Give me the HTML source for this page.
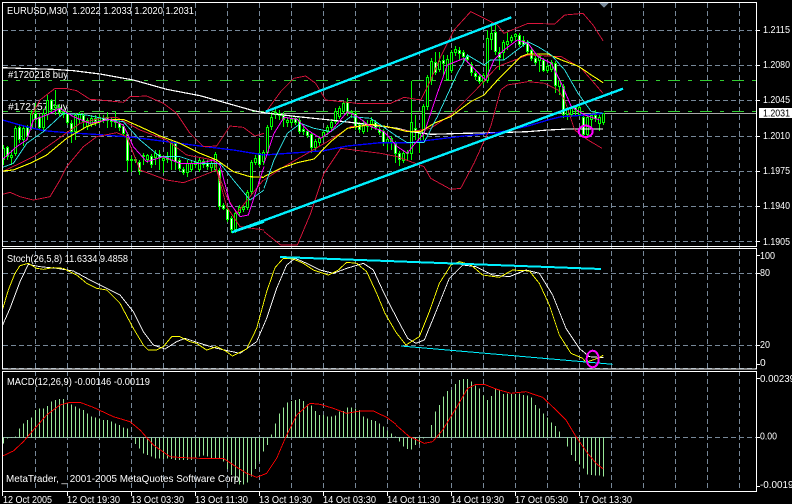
<!DOCTYPE html>
<html><head><meta charset="utf-8"><style>
html,body{margin:0;padding:0;background:#000;width:792px;height:504px;overflow:hidden}
svg{display:block}
text{font-family:"Liberation Sans",sans-serif;font-size:10.2px;fill:#fff}
polyline,path.l,ellipse{fill:none}
</style></head><body>
<svg width="792" height="504" viewBox="0 0 792 504" shape-rendering="crispEdges" xmlns="http://www.w3.org/2000/svg">
<rect width="792" height="504" fill="#000"/>
<!-- grid -->
<path class="l" stroke="#778899" stroke-dasharray="5 3" d="M35.5 3V491M67.5 3V491M99.5 3V491M131.5 3V491M163.5 3V491M195.5 3V491M227.5 3V491M259.5 3V491M291.5 3V491M323.5 3V491M355.5 3V491M387.5 3V491M419.5 3V491M451.5 3V491M483.5 3V491M515.5 3V491M547.5 3V491M579.5 3V491M611.5 3V491M643.5 3V491M675.5 3V491M707.5 3V491M739.5 3V491"/>
<path class="l" stroke="#778899" stroke-dasharray="5 3" d="M3 30.5H756M3 65.5H756M3 100.5H756M3 136.5H756M3 171.5H756M3 206.5H756M3 241.5H756M3 273.5H756M3 345.5H756M3 368.5H756M3 437.5H756"/>
<path class="l" stroke="#8fb0a8" d="M3 437.5H611"/>
<path class="l" stroke="#32cd32" stroke-dasharray="12 8 4 8" stroke-dashoffset="-25" d="M3 80.5H756M3 111.5H756"/>
<path class="l" stroke="#a8a8a8" d="M3 113.5H756"/>
<path d="M599.5 3H608.5L604 8Z" fill="#778899"/>
<!-- labels under candles -->
<text x="8" y="78" textLength="60" lengthAdjust="spacingAndGlyphs">#1720218 buy</text>
<text x="8" y="110" textLength="60" lengthAdjust="spacingAndGlyphs">#172157 buy</text>
<!-- candles -->
<path class="l" stroke="#00ff00" d="M3.5 145V165M7.5 146V160M11.5 150V165M15.5 126V156M19.5 124V143M23.5 125V146M27.5 125V140M31.5 110V130M35.5 103V123M39.5 114V130M43.5 109V131M47.5 95V120M51.5 99V113M55.5 90V115M59.5 104V116M63.5 109V118M67.5 111V125M71.5 120V143M75.5 113V140M79.5 112V124M83.5 113V128M87.5 118V130M91.5 115V127M95.5 115V126M99.5 114V124M103.5 115V123M107.5 112V128M111.5 117V127M115.5 112V128M119.5 121V131M123.5 124V137M127.5 132V172M131.5 156V172M135.5 157V163M139.5 160V175M143.5 153V165M147.5 154V163M151.5 154V168M155.5 150V165M159.5 150V170M163.5 155V173M167.5 152V163M171.5 141V170M175.5 142V170M179.5 158V171M183.5 167V175M187.5 160V177M191.5 160V172M195.5 160V168M199.5 158V172M203.5 159V168M207.5 160V170M211.5 160V172M215.5 152V172M219.5 168V210M223.5 203V210M227.5 207V222M231.5 216V233M235.5 210V233M239.5 205V216M243.5 205V212M247.5 190V210M251.5 160V195M255.5 155V165M259.5 138V167M263.5 150V165M267.5 125V155M271.5 112V130M275.5 108V119M279.5 110V120M283.5 112V127M287.5 117V127M291.5 116V126M295.5 116V125M299.5 118V134M303.5 126V135M307.5 129V138M311.5 132V153M315.5 139V151M319.5 136V146M323.5 130V140M327.5 125V135M331.5 119V130M335.5 108V124M339.5 106V119M343.5 101V114M347.5 98V116M351.5 110V118M355.5 111V130M359.5 122V133M363.5 120V134M367.5 120V132M371.5 117V130M375.5 120V130M379.5 127V135M383.5 129V146M387.5 137V150M391.5 136V150M395.5 141V163M399.5 151V166M403.5 150V163M407.5 150V160M411.5 81V160M415.5 115V140M419.5 130V153M423.5 104V140M427.5 75V110M431.5 58V85M435.5 52V75M439.5 52V72M443.5 55V75M447.5 55V81M451.5 50V73M455.5 46V56M459.5 47V60M463.5 50V63M467.5 54V63M471.5 62V76M475.5 71V80M479.5 74V84M483.5 73V85M487.5 30V83M491.5 23V50M495.5 23V55M499.5 47V70M503.5 40V60M507.5 32V50M511.5 35V43M515.5 33V42M519.5 33V47M523.5 36V47M527.5 40V55M531.5 47V61M535.5 56V65M539.5 54V72M543.5 58V72M547.5 64V73M551.5 60V72M555.5 61V93M559.5 78V95M563.5 84V118M567.5 107V120M571.5 106V117M575.5 105V115M579.5 105V117M583.5 115V137M587.5 115V137M591.5 113V127M595.5 110V122M599.5 115V131M603.5 113V125"/>
<path class="l" stroke="#00ff00" stroke-width="3" d="M3.5 148V160M7.5 147V157M11.5 155V158M15.5 128V154M19.5 127V140M23.5 128V140M27.5 127V137M31.5 113V128M35.5 113V120M39.5 117V128M43.5 113V128M47.5 100V115M51.5 100V110M55.5 105V108M59.5 107V113M63.5 112V115M67.5 113V123M71.5 123V132M75.5 115V132M79.5 113V120M83.5 115V122M87.5 120V127M91.5 118V125M95.5 118V122M99.5 117V121M103.5 118V121M107.5 117V121M111.5 119V122M115.5 119V123M119.5 123V128M123.5 126V134M127.5 134V161M131.5 159V161M135.5 159V161M139.5 162V172M143.5 155V157M147.5 155V160M151.5 156V165M155.5 153V158M159.5 154V158M163.5 158V161M167.5 157V160M171.5 143V161M175.5 143V162M179.5 160V169M183.5 169V173M187.5 163V173M191.5 163V170M195.5 162V165M199.5 160V170M203.5 161V165M207.5 163V167M211.5 163V168M215.5 154V170M219.5 170V207M223.5 205V209M227.5 209V220M231.5 218V230M235.5 213V230M239.5 207V213M243.5 207V210M247.5 192V208M251.5 162V192M255.5 158V163M259.5 153V165M263.5 152V162M267.5 127V153M271.5 117V127M275.5 112V115M279.5 113V116M283.5 115V120M287.5 120V123M291.5 119V123M295.5 118V123M299.5 120V132M303.5 129V132M307.5 131V136M311.5 134V148M315.5 141V148M319.5 138V143M323.5 132V137M327.5 127V132M331.5 122V128M335.5 111V122M339.5 108V117M343.5 103V112M347.5 102V113M351.5 112V113M355.5 113V127M359.5 124V130M363.5 125V132M367.5 124V127M371.5 120V127M375.5 122V128M379.5 129V133M383.5 131V143M387.5 139V143M391.5 138V142M395.5 143V154M399.5 153V160M403.5 153V161M407.5 152V154M411.5 122V154M415.5 128V132M419.5 133V143M423.5 106V133M427.5 77V107M431.5 61V80M435.5 62V73M439.5 61V70M443.5 60V64M447.5 59V80M451.5 52V71M455.5 49V53M459.5 50V54M463.5 52V57M467.5 56V60M471.5 64V73M475.5 73V77M479.5 76V82M483.5 75V82M487.5 38V81M491.5 33V40M495.5 32V52M499.5 52V58M503.5 42V53M507.5 41V45M511.5 37V41M515.5 34V37M519.5 35V45M523.5 40V45M527.5 42V52M531.5 50V59M535.5 58V63M539.5 56V61M543.5 60V71M547.5 66V71M551.5 62V70M555.5 63V86M559.5 80V87M563.5 86V115M567.5 109V115M571.5 108V115M575.5 107V110M579.5 107V115M583.5 117V135M587.5 117V135M591.5 115V120M595.5 115V119M599.5 117V124M603.5 113V123"/>
<path class="l" stroke="#000" d="M3.5 149V159M11.5 156V157M15.5 129V153M23.5 129V139M31.5 114V127M43.5 114V127M47.5 101V114M55.5 106V107M75.5 116V131M79.5 114V119M87.5 121V126M91.5 119V124M99.5 118V120M147.5 156V159M155.5 154V157M163.5 159V160M171.5 144V160M187.5 164V172M191.5 164V169M199.5 161V169M211.5 164V167M215.5 155V169M235.5 214V229M239.5 208V212M243.5 208V209M247.5 193V207M251.5 163V191M255.5 159V162M263.5 153V161M267.5 128V152M271.5 118V126M275.5 113V114M287.5 121V122M291.5 120V122M315.5 142V147M319.5 139V142M323.5 133V136M327.5 128V131M331.5 123V127M335.5 112V121M339.5 109V116M343.5 104V111M363.5 126V131M367.5 125V126M371.5 121V126M387.5 140V142M391.5 139V141M403.5 154V160M411.5 123V153M419.5 134V142M423.5 107V132M427.5 78V106M431.5 62V79M439.5 62V69M447.5 60V79M451.5 53V70M455.5 50V52M483.5 76V81M487.5 39V80M491.5 34V39M503.5 43V52M507.5 42V44M511.5 38V40M515.5 35V36M539.5 57V60M547.5 67V70M551.5 63V69M559.5 81V86M567.5 110V114M571.5 109V114M579.5 108V114M587.5 118V134M591.5 116V119M599.5 118V123M603.5 114V122"/>
<path class="l" stroke="#fff" d="M7.5 148V156M19.5 128V139M27.5 128V136M35.5 114V119M39.5 118V127M51.5 101V109M59.5 108V112M63.5 113V114M67.5 114V122M71.5 124V131M83.5 116V121M95.5 119V121M103.5 119V120M107.5 118V120M111.5 120V121M115.5 120V122M119.5 124V127M123.5 127V133M127.5 135V160M139.5 163V171M151.5 157V164M159.5 155V157M167.5 158V159M175.5 144V161M179.5 161V168M183.5 170V172M195.5 163V164M203.5 162V164M207.5 164V166M219.5 171V206M223.5 206V208M227.5 210V219M231.5 219V229M259.5 154V164M279.5 114V115M283.5 116V119M295.5 119V122M299.5 121V131M303.5 130V131M307.5 132V135M311.5 135V147M347.5 103V112M355.5 114V126M359.5 125V129M375.5 123V127M379.5 130V132M383.5 132V142M395.5 144V153M399.5 154V159M415.5 129V131M435.5 63V72M443.5 61V63M459.5 51V53M463.5 53V56M467.5 57V59M471.5 65V72M475.5 74V76M479.5 77V81M495.5 33V51M499.5 53V57M519.5 36V44M523.5 41V44M527.5 43V51M531.5 51V58M535.5 59V62M543.5 61V70M555.5 64V85M563.5 87V114M575.5 108V109M583.5 118V134M595.5 116V118"/>
<!-- pane 1 curves: left -->
<g transform="scale(.33333)" fill="none" stroke-width="2.7">
<polyline stroke="#fff" stroke-width="3.6" points="8,203 60,205 160,208 220,212 300,222 400,240 500,268 600,287 700,315 760,332 792,338"/>
<polyline stroke="#0000ff" stroke-width="4" points="8,360 60,375 130,392 200,398 300,404 400,412 500,425 600,438 700,450 792,465"/>
<polyline stroke="#dc143c" points="95,345 120,300 165,265 195,265 230,272 270,298 300,300 370,307 390,290 440,288 490,310 530,340 570,400 610,440 650,438 690,378 730,382 765,408 792,400"/>
<polyline stroke="#dc143c" points="8,583 30,577 60,590 100,600 150,590 180,540 200,500 250,440 290,410 350,398 380,410 420,510 500,540 550,548 600,530 650,510 680,620 720,680 792,690"/>
<polyline stroke="#dc143c" points="8,515 100,470 170,420 240,370 300,355 350,352 420,390 500,420 560,465 640,480 680,590 710,640 790,540"/>
<polyline stroke="#ffff00" stroke-width="3.3" points="8,513 40,510 90,490 140,465 200,415 260,380 320,358 370,358 420,380 480,408 540,430 600,460 650,480 700,515 750,530 792,532"/>
<polyline stroke="#30e8e8" points="8,502 40,490 80,430 130,395 190,340 260,345 320,358 370,365 420,420 480,470 540,470 600,490 660,490 700,540 750,600 792,570"/>
<polyline stroke="#ff00ff" stroke-width="3" points="8,478 50,440 80,420 100,360 140,345 180,325 220,350 270,370 330,358 370,375 400,440 440,485 490,470 540,490 600,490 640,480 660,495 690,610 720,650 745,645 792,500"/>
<line x1="695" y1="697" x2="792" y2="665" stroke="#00ffff" stroke-width="7"/>
</g>
<!-- pane 1 curves: middle -->
<g transform="translate(264 0) scale(.33333)" fill="none" stroke-width="2.7">
<polyline stroke="#fff" stroke-width="3.6" points="0,338 100,350 200,360 300,372 400,385 440,395 500,403 600,400 700,398 792,395"/>
<polyline stroke="#0000ff" stroke-width="4" points="0,465 100,458 180,452 250,438 350,428 440,428 500,420 600,408 700,398 792,378"/>
<polyline stroke="#dc143c" points="10,330 50,275 90,235 125,228 155,250 185,300 280,310 380,310 420,292 470,300 500,240 530,170 570,90 620,35 660,55 700,75 720,100 792,70"/>
<polyline stroke="#dc143c" points="0,695 50,735 100,735 140,640 180,520 230,445 350,460 400,470 440,485 480,500 500,535 560,568 590,565 630,490 680,380 710,270 730,255 792,245"/>
<polyline stroke="#dc143c" points="0,540 60,500 130,460 190,425 260,380 340,375 440,395 500,385 560,345 640,265 700,200 792,165"/>
<polyline stroke="#ffff00" stroke-width="3.3" points="0,530 50,505 100,488 150,477 200,425 250,385 320,373 370,380 430,395 470,395 510,370 560,350 620,305 660,285 710,230 770,170 792,162"/>
<polyline stroke="#30e8e8" points="0,565 30,480 70,400 110,370 150,385 200,395 260,350 320,355 350,375 400,410 430,428 480,428 520,350 580,220 610,165 660,195 680,180 720,180 792,125"/>
<polyline stroke="#ff00ff" stroke-width="3" points="0,490 30,400 60,352 100,358 130,390 170,415 200,395 250,335 280,350 320,380 360,395 400,440 430,460 445,440 480,400 520,280 550,195 600,175 640,215 665,240 690,180 720,150 760,120 792,130"/>
</g>
<!-- pane 1 curves: right -->
<g transform="translate(528 0) scale(.33333)" fill="none" stroke-width="2.7">
<polyline stroke="#fff" stroke-width="3.6" points="0,395 60,390 120,387 225,387"/>
<polyline stroke="#0000ff" stroke-width="4" points="0,378 60,360 100,350 160,346 225,340"/>
<polyline stroke="#dc143c" points="0,70 80,72 110,45 165,40 195,75 225,122"/>
<polyline stroke="#dc143c" points="0,245 50,250 90,270 110,300 140,390 180,420 222,445"/>
<polyline stroke="#dc143c" points="0,165 100,170 160,205 225,280"/>
<polyline stroke="#ffff00" stroke-width="3.3" points="0,162 60,162 100,180 150,198 190,225 225,248"/>
<polyline stroke="#30e8e8" points="0,125 30,140 70,165 110,210 150,280 190,335 225,340"/>
<polyline stroke="#ff00ff" stroke-width="3" points="0,130 30,170 70,190 100,250 130,320 170,345 215,360"/>
</g>
<!-- thick channels -->
<path class="l" stroke="#00f0ff" stroke-width="2.4" d="M265.7 111.7L511.3 17.3M231.7 232.3L623 88.7"/>
<ellipse cx="585.7" cy="131.3" rx="7" ry="5.7" stroke="#ff00ff" stroke-width="2"/>
<!-- stochastic + macd -->
<g transform="translate(0 245) scale(.33333)" fill="none" stroke-width="2.7">
<polyline stroke="#fff" points="8,240 30,190 60,110 85,58 120,65 170,70 220,78 270,105 310,125 360,150 400,200 430,260 460,300 495,312 530,290 555,280 600,295 650,310 720,325 770,290 800,220 830,130 860,60 885,40 920,55 960,75 1000,85 1040,70 1090,55 1120,75 1150,140 1188,215"/>
<polyline stroke="#ffff00" points="8,192 25,135 45,85 60,62 85,55 110,70 130,73 160,68 190,70 230,90 260,115 290,130 320,135 360,175 400,250 430,300 445,315 470,315 490,305 515,275 540,275 570,290 590,295 620,315 650,305 680,320 697,333 740,312 770,250 800,140 825,68 850,40 880,42 910,55 940,75 985,90 1015,75 1040,52 1070,55 1100,80 1130,145 1155,205 1188,262"/>
<path stroke="#98e898" stroke-width="3" d="M10.5 577V595M22.5 577V580M34.5 577V579M46.5 577V575M58.5 577V550M70.5 577V535M82.5 577V525M94.5 577V517M106.5 577V495M118.5 577V490M130.5 577V490M142.5 577V483M154.5 577V470M166.5 577V465M178.5 577V462M190.5 577V462M202.5 577V475M214.5 577V478M226.5 577V485M238.5 577V490M250.5 577V495M262.5 577V505M274.5 577V515M286.5 577V517M298.5 577V520M310.5 577V525M322.5 577V525M334.5 577V530M346.5 577V535M358.5 577V540M370.5 577V547M382.5 577V550M406.5 577V597M418.5 577V610M430.5 577V625M442.5 577V630M454.5 577V635M466.5 577V640M478.5 577V640M490.5 577V642M502.5 577V640M514.5 577V642M526.5 577V645M538.5 577V645M550.5 577V645M562.5 577V645M574.5 577V645M586.5 577V640M598.5 577V635M610.5 577V632M622.5 577V635M634.5 577V640M646.5 577V640M658.5 577V640M670.5 577V650M682.5 577V672M694.5 577V690M706.5 577V705M718.5 577V718M730.5 577V718M742.5 577V712M754.5 577V695M766.5 577V672M778.5 577V650M790.5 577V620M802.5 577V600M814.5 577V568M826.5 577V535M838.5 577V505M850.5 577V487M862.5 577V472M874.5 577V468M886.5 577V465M898.5 577V462M910.5 577V468M922.5 577V478M934.5 577V482M946.5 577V498M958.5 577V510M970.5 577V510M982.5 577V515M994.5 577V515M1006.5 577V512M1018.5 577V500M1030.5 577V498M1042.5 577V488M1054.5 577V487M1066.5 577V490M1078.5 577V495M1090.5 577V515M1102.5 577V520M1114.5 577V525M1126.5 577V528M1138.5 577V535M1150.5 577V545M1162.5 577V557M1174.5 577V565M1186.5 577V575"/>
<polyline stroke="#ff0000" points="8,633 40,618 70,590 100,555 140,510 180,480 210,472 240,472 280,487 340,515 390,530 420,555 460,600 510,635 550,638 600,640 670,640 700,660 740,685 770,697 800,685 830,640 860,570 890,510 930,475 960,478 1000,490 1040,505 1080,498 1120,498 1160,517 1188,538"/>
</g>
<g transform="translate(396 245) scale(.33333)" fill="none" stroke-width="2.7">
<polyline stroke="#fff" points="0,215 35,280 60,295 85,285 120,200 160,100 200,60 240,65 290,90 340,95 390,75 430,85 470,150 510,250 550,310 580,335 622,338"/>
<polyline stroke="#ffff00" points="0,262 30,300 70,275 100,200 130,115 165,60 190,50 225,60 260,90 310,97 350,75 400,78 430,115 460,180 490,270 525,325 560,340 570,352 610,338 622,330"/>
<path stroke="#98e898" stroke-width="3" d="M10.5 577V590M22.5 577V605M34.5 577V612M46.5 577V613M58.5 577V600M70.5 577V597M82.5 577V580M106.5 577V540M118.5 577V500M130.5 577V480M142.5 577V455M154.5 577V438M166.5 577V435M178.5 577V417M190.5 577V405M202.5 577V402M214.5 577V402M226.5 577V410M238.5 577V422M250.5 577V430M262.5 577V452M274.5 577V465M286.5 577V453M298.5 577V430M310.5 577V437M322.5 577V447M334.5 577V445M346.5 577V447M358.5 577V447M370.5 577V445M382.5 577V450M394.5 577V452M406.5 577V458M418.5 577V480M430.5 577V490M442.5 577V505M454.5 577V518M466.5 577V533M478.5 577V543M490.5 577V560M514.5 577V605M526.5 577V630M538.5 577V648M550.5 577V658M562.5 577V670M574.5 577V688M586.5 577V690M598.5 577V692M610.5 577V692M622.5 577V695"/>
<polyline stroke="#ff0000" points="0,540 40,575 85,595 110,590 140,555 180,490 215,430 240,418 265,418 300,432 345,445 390,440 440,457 480,495 510,525 540,575 575,625 600,655 622,672"/>
</g>
<path class="l" stroke="#00f0ff" stroke-width="2" d="M280 257L601 269"/>
<path class="l" stroke="#00f0ff" d="M401 346L612.7 364.3"/>
<ellipse cx="592.7" cy="359" rx="6" ry="8.3" stroke="#ff00ff" stroke-width="2"/>
<!-- frames -->
<rect x="2.5" y="2.5" width="754" height="244" fill="none" stroke="#fff"/>
<rect x="2.5" y="248.5" width="754" height="120.5" fill="none" stroke="#fff"/>
<rect x="2.5" y="371.5" width="754" height="120" fill="none" stroke="#fff"/>
<path class="l" stroke="#fff" d="M757 30.5H760M757 65.5H760M757 100.5H760M757 136.5H760M757 171.5H760M757 206.5H760M757 241.5H760M757 255.5H760M757 273.5H760M757 345.5H760M757 364.5H760M757 378.5H760M757 437.5H760M757 486.5H760M2.5 492V496M67.5 492V496M131.5 492V496M195.5 492V496M259.5 492V496M323.5 492V496M387.5 492V496M451.5 492V496M515.5 492V496M579.5 492V496"/>
<!-- text -->
<text x="7" y="14" textLength="187" lengthAdjust="spacingAndGlyphs">EURUSD,M30&#160;&#160;1.2022 1.2033 1.2020 1.2031</text>
<text x="7" y="262" textLength="121" lengthAdjust="spacingAndGlyphs">Stoch(26,5,8) 11.6334 9.4858</text>
<text x="7" y="385" textLength="143" lengthAdjust="spacingAndGlyphs">MACD(12,26,9) -0.00146 -0.00119</text>
<text x="6" y="482" textLength="236" lengthAdjust="spacingAndGlyphs">MetaTrader, _ 2001-2005 MetaQuotes Software Corp.</text>
<text x="763" y="33" textLength="27" lengthAdjust="spacingAndGlyphs">1.2115</text>
<text x="763" y="68" textLength="27" lengthAdjust="spacingAndGlyphs">1.2080</text>
<text x="763" y="103" textLength="27" lengthAdjust="spacingAndGlyphs">1.2045</text>
<text x="763" y="139" textLength="27" lengthAdjust="spacingAndGlyphs">1.2010</text>
<text x="763" y="174" textLength="27" lengthAdjust="spacingAndGlyphs">1.1975</text>
<text x="763" y="209" textLength="27" lengthAdjust="spacingAndGlyphs">1.1940</text>
<text x="763" y="245" textLength="27" lengthAdjust="spacingAndGlyphs">1.1905</text>
<rect x="759" y="108" width="33" height="10" fill="#fff"/>
<text x="763" y="116.5" textLength="27" lengthAdjust="spacingAndGlyphs" style="fill:#000">1.2031</text>
<text x="760" y="259" textLength="15" lengthAdjust="spacingAndGlyphs">100</text>
<text x="760" y="276" textLength="10" lengthAdjust="spacingAndGlyphs">80</text>
<text x="760" y="348" textLength="10" lengthAdjust="spacingAndGlyphs">20</text>
<text x="760" y="366">0</text>
<text x="760" y="382" textLength="35" lengthAdjust="spacingAndGlyphs">0.00239</text>
<text x="760" y="439.5" textLength="17" lengthAdjust="spacingAndGlyphs">0.00</text>
<text x="760" y="488" textLength="39" lengthAdjust="spacingAndGlyphs">-0.00192</text>
<text x="3" y="503" textLength="49" lengthAdjust="spacingAndGlyphs">12 Oct 2005</text>
<text x="67" y="503" textLength="53" lengthAdjust="spacingAndGlyphs">12 Oct 19:30</text>
<text x="131" y="503" textLength="53" lengthAdjust="spacingAndGlyphs">13 Oct 03:30</text>
<text x="195" y="503" textLength="53" lengthAdjust="spacingAndGlyphs">13 Oct 11:30</text>
<text x="259" y="503" textLength="53" lengthAdjust="spacingAndGlyphs">13 Oct 19:30</text>
<text x="323" y="503" textLength="53" lengthAdjust="spacingAndGlyphs">14 Oct 03:30</text>
<text x="387" y="503" textLength="53" lengthAdjust="spacingAndGlyphs">14 Oct 11:30</text>
<text x="451" y="503" textLength="53" lengthAdjust="spacingAndGlyphs">14 Oct 19:30</text>
<text x="515" y="503" textLength="53" lengthAdjust="spacingAndGlyphs">17 Oct 05:30</text>
<text x="579" y="503" textLength="53" lengthAdjust="spacingAndGlyphs">17 Oct 13:30</text>
</svg>
</body></html>
